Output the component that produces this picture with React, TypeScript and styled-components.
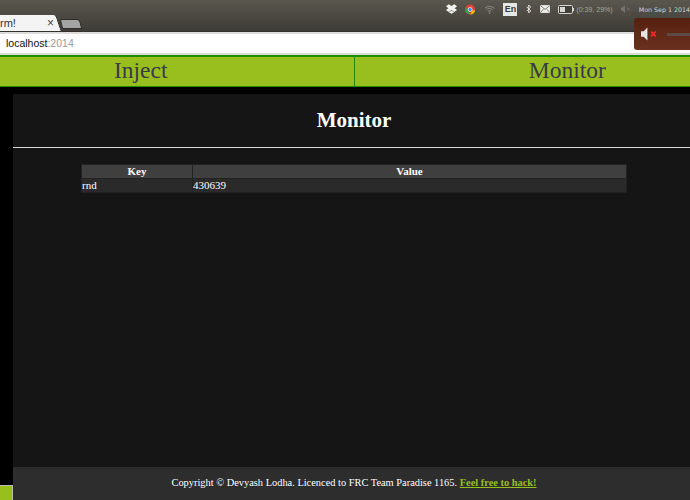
import styled, { createGlobalStyle } from "styled-components";

const Global = createGlobalStyle`
  html, body {
    margin: 0;
    padding: 0;
    background: #000;
    overflow: hidden;
  }
  * { box-sizing: border-box; }
`;

const App = () => {
  return (
    <Screen>
      <Global />
      <TopBar>
        <TabStrip>
          <ActiveTab>
            <TabTitle>rm!</TabTitle>
            <TabClose>×</TabClose>
          </ActiveTab>
          <NewTab />
        </TabStrip>
        <Tray>
          <svg width="14" height="12" viewBox="0 0 14 12">
            <path d="M3.5 0 7 2.3 10.5 0 14 2.6 11 5 14 7.4 10.5 9.7 7 7.4 3.5 9.7 0 7.4 3 5 0 2.6Z M3.6 10.2 7 8.2 10.4 10.2 7 12Z" fill="#f2f2f0" />
          </svg>
          <svg width="13" height="13" viewBox="0 0 24 24">
            <circle cx="12" cy="12" r="12" fill="#db4437" />
            <path d="M12 24A12 12 0 0 1 1.6 6L8 16l4 8Z" fill="#2e9e4f" />
            <path d="M12 24l6-10h5.500A12 12 0 0 1 12 24Z" fill="#f4c20d" />
            <circle cx="12" cy="12" r="5.500" fill="#fff" />
            <circle cx="12" cy="12" r="4" fill="#4285f4" />
          </svg>
          <svg width="14" height="11" viewBox="0 0 14 11" fill="none" stroke="#8f8e88" strokeWidth="1.200">
            <path d="M1 4a8.500 8.500 0 0 1 12 0M3 6a5.500 5.500 0 0 1 8 0M5 8a2.800 2.800 0 0 1 4 0" />
            <circle cx="7" cy="9.800" r=".6" fill="#8f8e88" />
          </svg>
          <LangBadge>En</LangBadge>
          <svg width="7" height="12" viewBox="0 0 7 12" fill="none" stroke="#e8e8e4" strokeWidth="1.200">
            <path d="M.8 3.200 6 8.400 3.400 11V1L6 3.600.8 8.800" />
          </svg>
          <svg width="13" height="10" viewBox="0 0 13 10">
            <rect x=".5" y=".5" width="12" height="9" rx="1" fill="#efefeb" stroke="#efefeb" />
            <path d="M1 1l5.500 4.500L12 1M1 9l4-4.500M12 9 8 4.500" fill="none" stroke="#55534d" strokeWidth=".9" />
          </svg>
          <BatteryGroup>
            <svg width="16" height="9" viewBox="0 0 16 9">
              <rect x=".5" y=".5" width="14" height="8" rx="1.200" fill="#3f3e39" stroke="#d8d8d2" />
              <rect x="2" y="2" width="5" height="5" fill="#d8d8d2" />
              <rect x="14.800" y="3" width="1.200" height="3" fill="#d8d8d2" />
            </svg>
            <BatteryText>(0:39, 29%)</BatteryText>
          </BatteryGroup>
          <svg width="12" height="10" viewBox="0 0 12 10" fill="#77766f">
            <path d="M0 3h2l3-3v10L2 7H0Z" />
            <path d="M7.500 3l3.500 4M11 3 7.500 7" fill="none" stroke="#77766f" />
          </svg>
          <Clock>Mon Sep 1 2014</Clock>
        </Tray>
      </TopBar>
      <AddressBar>
        <AddressField>
          <Host>localhost</Host>
          <Port>:2014</Port>
        </AddressField>
      </AddressBar>
      <VolumePopup>
        <svg width="20" height="14" viewBox="0 0 20 14">
          <path d="M0 4h3l4-4v14l-4-4H0Z" fill="#e4e4e0" />
          <path d="M11 4.500l5 5M16 4.500l-5 5" stroke="#ee2a2a" strokeWidth="2" />
        </svg>
        <VolumeTrack />
      </VolumePopup>

      <Nav>
        <NavItem>Inject</NavItem>
        <NavItem $divided>Monitor</NavItem>
      </Nav>

      <Body>
        <Page>
          <Main>
            <Heading>Monitor</Heading>
            <Rule />
            <TableWrap>
              <Table>
                <thead>
                  <tr>
                    <Th $w={110}>Key</Th>
                    <Th>Value</Th>
                  </tr>
                </thead>
                <tbody>
                  <tr>
                    <Td>rnd</Td>
                    <Td>430639</Td>
                  </tr>
                </tbody>
              </Table>
            </TableWrap>
          </Main>
          <Footer>
            Copyright © Devyash Lodha. Licenced to FRC Team Paradise 1165.&nbsp;
            <FooterLink href="#">Feel free to hack!</FooterLink>
          </Footer>
        </Page>
      </Body>
      <SideButton />
    </Screen>
  );
};

export default App;

const Screen = styled.div`
  position: relative;
  display: flex;
  flex-direction: column;
  width: 690px;
  height: 500px;
  overflow: hidden;
  background: #000;
  font-family: "Liberation Serif", serif;
`;

const TopBar = styled.div`
  display: flex;
  justify-content: space-between;
  flex: none;
  height: 32px;
  background: linear-gradient(#5a574e, #3d3c37);
  border-bottom: 1px solid #33322e;
`;

const TabStrip = styled.div`
  display: flex;
  align-items: flex-end;
`;

const ActiveTab = styled.div`
  position: relative;
  display: flex;
  align-items: center;
  justify-content: space-between;
  width: 55px;
  height: 16px;
  padding: 0 1px 0 0;
  background: #f4f4f4;
  font-family: "Liberation Sans", sans-serif;

  &::after {
    content: "";
    position: absolute;
    top: 0;
    right: -4px;
    width: 8px;
    height: 100%;
    background: #f4f4f4;
    border-right: 1px solid #222;
    border-top-right-radius: 3px;
    transform: skewX(18deg);
  }
`;

const TabTitle = styled.span`
  font-size: 11px;
  color: #333;
`;

const TabClose = styled.span`
  position: relative;
  z-index: 1;
  font-size: 12px;
  line-height: 12px;
  color: #444;
`;

const NewTab = styled.div`
  width: 20px;
  height: 10px;
  margin: 0 0 2px 6px;
  background: #a4a4a2;
  border: 1px solid #2e2d2a;
  border-radius: 2px 3px 0 0;
  transform: skewX(14deg);
`;

const Tray = styled.div`
  display: flex;
  align-items: center;
  gap: 8.400px;
  width: 244px;
  height: 16px;
  margin-top: 1px;
  white-space: nowrap;
`;

const LangBadge = styled.div`
  flex: none;
  width: 14px;
  height: 13px;
  background: #e6e6e2;
  color: #3a3a36;
  font: 700 9px/13px "Liberation Sans", sans-serif;
  text-align: center;
`;

const BatteryGroup = styled.div`
  display: flex;
  align-items: center;
  gap: 2px;
`;

const BatteryText = styled.span`
  font: 7px "Liberation Sans", sans-serif;
  color: #a8a7a0;
`;

const Clock = styled.span`
  font: 6.300px "DejaVu Sans", sans-serif;
  color: #d4d3cc;
`;

const AddressBar = styled.div`
  flex: none;
  height: 23px;
  padding: 2px 0;
  background: #dcdcdc;
`;

const AddressField = styled.div`
  height: 19px;
  padding-left: 6px;
  background: #fff;
  font: 10.500px/18px "Liberation Sans", sans-serif;
`;

const Host = styled.span`
  color: #111;
`;

const Port = styled.span`
  color: #999;
`;

const VolumePopup = styled.div`
  position: absolute;
  top: 18px;
  left: 634px;
  display: flex;
  align-items: center;
  gap: 8px;
  width: 70px;
  height: 32px;
  padding-left: 7px;
  background: linear-gradient(#55200f, #6b3020);
  border-radius: 3px;
`;

const VolumeTrack = styled.div`
  width: 40px;
  height: 3px;
  background: #5c4a44;
`;

/* the page is wider than the window here, both cells run past the edges */
const Nav = styled.nav`
  display: flex;
  flex: none;
  width: 852px;
  height: 32px;
  margin-left: -72px;
  background: #98bf1e;
  border-top: 2px solid #1f8c00;
  border-bottom: 1px solid #1f8c00;
`;

const NavItem = styled.div<{ $divided?: boolean }>`
  flex: 1;
  border-left: ${(props) => (props.$divided ? "1px solid #1f8c00" : "0")};
  font-size: 23.500px;
  line-height: 27px;
  color: #3a3a4a;
  text-align: center;
`;

const Body = styled.div`
  flex: 1;
  min-height: 0;
  padding: 7px 0 0 13px;
`;

const Page = styled.div`
  display: flex;
  flex-direction: column;
  width: 682px;
  height: 100%;
  background: #151515;
`;

const Main = styled.div`
  flex: 1;
`;

const Heading = styled.h1`
  margin: 0;
  padding: 14px 0;
  font-size: 21px;
  line-height: 25px;
  color: #fff;
  text-align: center;
`;

const Rule = styled.div`
  height: 1px;
  background: #d8d8d8;
`;

const TableWrap = styled.div`
  padding: 16px 68px 0;
`;

const Table = styled.table`
  width: 100%;
  border-collapse: separate;
  border-spacing: 1px;
  background: #222;
  font-size: 11px;
  color: #fff;
`;

const Th = styled.th<{ $w?: number }>`
  width: ${(props) => (props.$w ? `${props.$w}px` : "auto")};
  height: 13px;
  padding: 0;
  background: #3f3f3f;
  line-height: 13px;
`;

const Td = styled.td`
  height: 13px;
  padding: 0;
  background: #2a2a2a;
  line-height: 13px;
`;

const Footer = styled.footer`
  flex: none;
  height: 33px;
  padding-top: 9px;
  background: #2d2d2d;
  font-size: 10.400px;
  line-height: 14px;
  color: #fff;
  text-align: center;
  white-space: nowrap;
`;

const FooterLink = styled.a`
  color: #98bf1e;
  font-weight: 700;
`;

const SideButton = styled.div`
  position: absolute;
  left: 0;
  bottom: 0;
  width: 13px;
  height: 15px;
  background: #98bf1e;
  border-top: 1px solid #bbb;
  border-right: 1px solid #bbb;
`;
